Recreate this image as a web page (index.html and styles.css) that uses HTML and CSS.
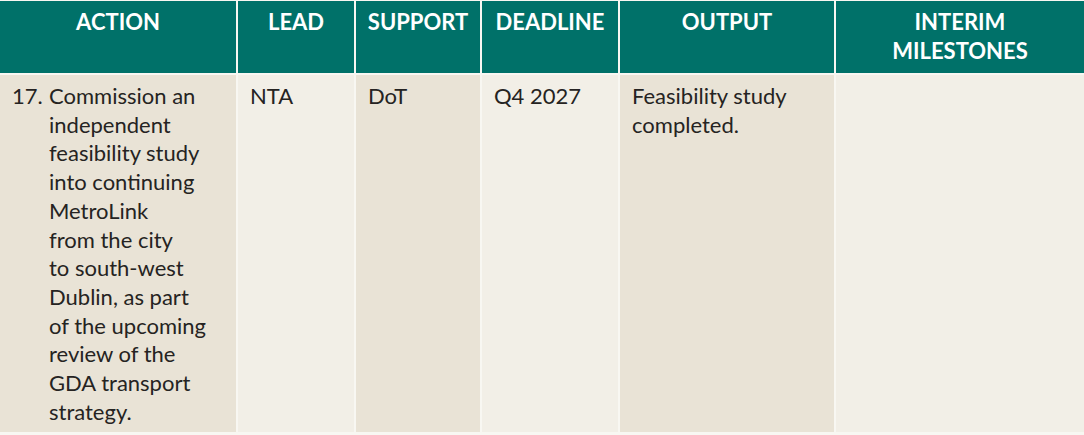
FILE: index.html
```html
<!DOCTYPE html>
<html lang="en">
<head>
<meta charset="utf-8">
<title>Action table</title>
<link rel="stylesheet" href="styles.css">
</head>
<body>
<div class="table">
  <div class="th">ACTION</div>
  <div class="th">LEAD</div>
  <div class="th">SUPPORT</div>
  <div class="th">DEADLINE</div>
  <div class="th">OUTPUT</div>
  <div class="th">INTERIM<br>MILESTONES</div>

  <div class="td dark action">
    <span class="num">17.</span>
    <span class="text">Commission an<br>independent<br>feasibility study<br>into continuing<br>MetroLink<br>from the city<br>to south-west<br>Dublin, as part<br>of the upcoming<br>review of the<br>GDA transport<br>strategy.</span>
  </div>
  <div class="td light">NTA</div>
  <div class="td dark">DoT</div>
  <div class="td light">Q4 2027</div>
  <div class="td dark">Feasibility study<br>completed.</div>
  <div class="td light"></div>
</div>
</body>
</html>
```

FILE: styles.css
```css
html, body {
  margin: 0;
  padding: 0;
  background: #f8f7f2;
}

body {
  width: 1084px;
  height: 435px;
  overflow: hidden;
  font-family: Lato, "Open Sans", sans-serif;
}

.table {
  display: grid;
  grid-template-columns: 236px 116px 124px 136px 214px 248px;
  grid-template-rows: 72px 357px;
  column-gap: 2px;
  row-gap: 2px;
  padding-top: 1px;
  background: #f8f7f2;
}

.th {
  background: #007169;
  color: #ffffff;
  font-weight: 700;
  font-size: 22px;
  line-height: 28.6px;
  text-align: center;
  padding-top: 7px;
}

.td {
  color: #252322;
  font-size: 22px;
  line-height: 28.7px;
  padding: 7px 12px 0 12px;
}

.dark {
  background: #e9e3d6;
}

.light {
  background: #f2efe7;
}

.action {
  display: flex;
  gap: 5px;
}

.num {
  flex: none;
  width: 32px;
}
```
